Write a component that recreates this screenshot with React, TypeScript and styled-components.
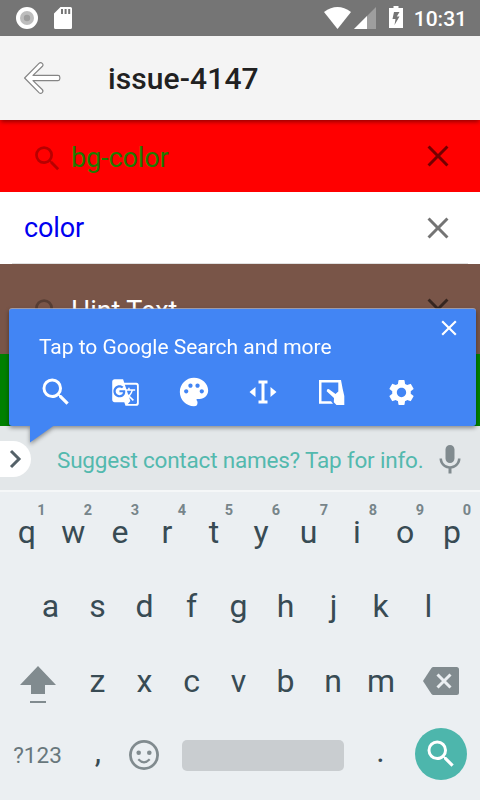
import React from 'react';
import styled, { createGlobalStyle } from 'styled-components';
import { MdGTranslate, MdPalette, MdSettings, MdMic, MdSearch, MdClose } from 'react-icons/md';

const GlobalStyle = createGlobalStyle`
  * { box-sizing: border-box; }
  body { margin: 0; overflow: hidden; font-family: Roboto, sans-serif; }
  svg { display: block; flex: none; }
`;

const Screen = styled.div`
  position: relative;
  width: 480px;
  height: 800px;
  display: flex;
  flex-direction: column;
  overflow: hidden;
  background: #fff;
`;

const StatusBar = styled.header`
  height: 36px;
  flex: none;
  display: flex;
  align-items: center;
  justify-content: space-between;
  padding: 0 13px 0 16px;
  background: #757575;
  color: #fff;
`;

const StatusGroup = styled.div<{ $gap: number }>`
  display: flex;
  align-items: center;
  gap: ${p => p.$gap}px;
`;

const Clock = styled.span`
  font-size: 21px;
  font-weight: 500;
  line-height: 36px;
  padding-top: 1px;
`;

const AppBar = styled.div`
  position: relative;
  height: 84px;
  flex: none;
  display: flex;
  align-items: center;
  padding-left: 22px;
  gap: 46px;
  background: #f4f4f4;
  box-shadow: 0 3px 4px -1px rgba(0, 0, 0, 0.4);
  z-index: 1;
`;

const Title = styled.h1`
  margin: 0;
  padding-top: 1px;
  font-size: 30px;
  font-weight: 500;
  line-height: 36px;
  letter-spacing: 0.1px;
  color: #212121;
`;

const SearchRow = styled.div<{ $bg: string; $height: number; $inset: number }>`
  height: ${p => p.$height}px;
  flex: none;
  display: flex;
  align-items: center;
  padding: 0 24px 0 ${p => p.$inset}px;
  background: ${p => p.$bg};
`;

const SearchGlyph = styled(MdSearch)`
  margin: 4px 7px 0 0;
  opacity: 0.28;
`;

const SearchText = styled.span<{ $color: string; $drop: number }>`
  flex: 1;
  font-size: 27px;
  line-height: 32px;
  letter-spacing: -0.1px;
  padding-top: ${p => p.$drop}px;
  color: ${p => p.$color};
`;

const ClearGlyph = styled(MdClose)`
  opacity: 0.54;
`;

const Divider = styled.div`
  height: 1px;
  flex: none;
  margin: -1px 12px 0;
  background: #e0e0e0;
`;

const Keyboard = styled.section`
  height: 374px;
  flex: none;
  display: flex;
  flex-direction: column;
  background: #ebeff2;
`;

const Suggestions = styled.div`
  height: 66px;
  flex: none;
  display: flex;
  align-items: center;
  background: #e3e7e9;
  border-bottom: 2px solid #f5f7f8;
`;

const Expander = styled.div`
  width: 31px;
  height: 36px;
  border-radius: 0 18px 18px 0;
  background: #fff;
  display: flex;
  align-items: center;
  padding-left: 9px;
  margin-top: 2px;
`;

const Suggestion = styled.span`
  flex: 1;
  padding: 4px 0 0 26px;
  font-size: 22.5px;
  line-height: 28px;
  letter-spacing: -0.2px;
  color: #53b9ae;
  white-space: nowrap;
`;

const MicGlyph = styled(MdMic)`
  margin: 3px 12px 0 0;
`;

const KeyRow = styled.div<{ $inset: number }>`
  height: 74.25px;
  flex: none;
  display: flex;
  align-items: center;
  padding-left: ${p => p.$inset}px;
`;

const Keys = styled.div`
  padding-top: 3px;
`;

const Key = styled.div<{ $lift?: number; $width?: number }>`
  position: relative;
  width: ${p => p.$width ?? 47}px;
  height: 74.25px;
  flex: none;
  text-align: center;
  font-size: 32px;
  line-height: ${p => 74.25 - 2 * (p.$lift ?? 0)}px;
  color: #384b54;
`;

const KeyHint = styled.span`
  position: absolute;
  top: 8px;
  right: 4.5px;
  font-size: 14.5px;
  line-height: 16px;
  font-weight: 700;
  color: #77858a;
`;

const ControlKey = styled.div<{ $width: number; $drop?: number }>`
  width: ${p => p.$width}px;
  height: 74.25px;
  flex: none;
  display: flex;
  align-items: center;
  justify-content: center;
  padding-top: ${p => p.$drop ?? 0}px;
  font-size: 22.5px;
  color: #68777c;
`;

const SpaceBar = styled.div`
  width: 162px;
  height: 31px;
  margin: 1px 13px 0 15px;
  border-radius: 5px;
  background: #c9cdd0;
`;

const SearchKey = styled.div`
  width: 52px;
  height: 52px;
  margin: -1px 0 0 10.5px;
  border-radius: 50%;
  background: #4db6ac;
  color: #fff;
  display: flex;
  align-items: center;
  justify-content: center;
`;

const Popup = styled.aside`
  position: absolute;
  left: 9px;
  top: 309px;
  width: 466.5px;
  height: 117px;
  z-index: 2;
  border-radius: 3px;
  background: #4285f4;
  color: #fff;
  filter: drop-shadow(0 2px 2px rgba(0, 0, 0, 0.4));
  box-shadow: 0 -1px 0 rgba(190, 205, 235, 0.6);
`;

const PopupTail = styled.svg`
  position: absolute;
  left: 21px;
  top: 116px;
`;

const PopupClose = styled(MdClose)`
  position: absolute;
  right: 14px;
  top: 5.5px;
`;

const PopupText = styled.p`
  margin: 0;
  padding: 24px 0 0 30px;
  font-size: 21px;
  line-height: 28px;
  letter-spacing: -0.03px;
  white-space: nowrap;
`;

const PopupTools = styled.div`
  display: flex;
  padding: 13px 0 0 12.5px;
`;

const Tool = styled.div`
  width: 69px;
  height: 36px;
  display: flex;
  align-items: center;
  justify-content: center;
`;

const BackArrow = () => (
  <svg width="40" height="40" viewBox="0 0 40 40">
    <path
      d="M2.6 20 17 5.4q1.6-1.5 3.2 0t0 3.1L11 17.4H36q1.8 0 1.8 1.8v1.6q0 1.8-1.8 1.8H11l9.2 8.9q1.5 1.6 0 3.1t-3.2 0z"
      fill="#fff"
      stroke="#858585"
      strokeWidth="1.2"
      strokeLinejoin="round"
    />
  </svg>
);

const RecordIcon = () => (
  <svg width="22" height="22" viewBox="0 0 22 22">
    <circle cx="11" cy="11" r="11" fill="#fff" />
    <circle cx="11" cy="11" r="7" fill="#bdbdbd" />
    <circle cx="11" cy="11" r="3.2" fill="#9e9e9e" />
  </svg>
);

const SdCardIcon = () => (
  <svg width="18" height="22" viewBox="0 0 18 22">
    <path
      fill="#fff"
      fillRule="evenodd"
      d="M6.5 0H16.5q1.5 0 1.5 1.5v19q0 1.5-1.5 1.5h-15Q0 22 0 20.5V6.5zM7 2v5h2V2zm3.6 0v5h2V2zm3.6 0v5h2V2z"
    />
  </svg>
);

const WifiIcon = () => (
  <svg width="27" height="22" viewBox="0 0 27 22">
    <path fill="#fff" d="M0 5Q13.5-5 27 5L13.5 22z" />
  </svg>
);

const SignalIcon = () => (
  <svg width="22" height="22" viewBox="0 0 22 22">
    <path fill="#9e9e9e" d="M22 0v22H0z" />
    <path fill="#fff" d="M13 9v13H0z" />
  </svg>
);

const BatteryIcon = () => (
  <svg width="14" height="24" viewBox="0 0 14 24">
    <path
      fill="#fff"
      fillRule="evenodd"
      d="M4.5 0h5v2H14v20H0V2h4.5zM5 6 3.5 13h3L5.5 19l5-8.500H7.800L10.500 6z"
    />
  </svg>
);

const SelectTextIcon = () => (
  <svg width="28" height="24" viewBox="0 0 28 24" fill="currentColor">
    <path d="M9.5.5h9v3h-3v17h3v3h-9v-3h3v-17h-3zM6.5 7v10L.5 12zM21.5 7v10l6-5z" />
  </svg>
);

const TouchPageIcon = () => (
  <svg width="26" height="25" viewBox="0 0 26 25" fill="currentColor">
    <path d="M0 0H22L23.7 9 25.3 16V25H17.5L14.8 22.2 15 18 7.7 11.3Q7.7 8.5 10 9.2L16.5 14 19.3 11.5V2.5H2.5V21.3H12L14 23.8H0z" />
  </svg>
);

const ShiftIcon = () => (
  <svg width="36" height="38" viewBox="0 0 36 38" fill="#818b8f">
    <path d="M18 0 36 19H25v9H11v-9H0zM10 35h16v2H10z" />
  </svg>
);

const BackspaceIcon = () => (
  <svg width="36" height="28" viewBox="0 0 36 28">
    <path fill="#818b8f" d="M10.5 0H33.5Q36 0 36 2.5v23q0 2.5-2.5 2.5h-23q-1.3 0-2.2-1.3L0 14 8.3 1.3Q9.2 0 10.5 0z" />
    <path stroke="#ebeff2" strokeWidth="3" d="m14.5 7.5 13 13m0-13-13 13" />
  </svg>
);

const SmileIcon = () => (
  <svg width="30" height="30" viewBox="0 0 30 30" fill="none" stroke="#818b8f">
    <circle cx="15" cy="15" r="13.6" strokeWidth="2.8" />
    <circle cx="9.7" cy="12.7" r="2.3" fill="#818b8f" stroke="none" />
    <circle cx="20.3" cy="12.7" r="2.3" fill="#818b8f" stroke="none" />
    <path d="M9.3 19.3q5.7 6 11.4 0" strokeWidth="2.2" />
  </svg>
);

const ChevronIcon = () => (
  <svg width="14" height="20" viewBox="0 0 14 20" fill="none" stroke="#546168" strokeWidth="3">
    <path d="m2 2 8 8-8 8" />
  </svg>
);

type KeySpec = [letter: string, width: number];

const topRow: KeySpec[] = [
  ['q', 46.5], ['w', 46.5], ['e', 47], ['r', 47], ['t', 47],
  ['y', 47], ['u', 48], ['i', 49], ['o', 47], ['p', 47],
];
const homeRow: KeySpec[] = [
  ['a', 47], ['s', 47], ['d', 47], ['f', 47], ['g', 47],
  ['h', 47], ['j', 49], ['k', 45], ['l', 51],
];
const bottomRow: KeySpec[] = [
  ['z', 47], ['x', 47], ['c', 47], ['v', 47], ['b', 47], ['n', 48], ['m', 48],
];

export default function App() {
  return (
    <>
      <GlobalStyle />
      <Screen>
        <StatusBar>
          <StatusGroup $gap={16}>
            <RecordIcon />
            <SdCardIcon />
          </StatusGroup>
          <StatusGroup $gap={13}>
            <StatusGroup $gap={3}>
              <WifiIcon />
              <SignalIcon />
            </StatusGroup>
            <StatusGroup $gap={11}>
              <BatteryIcon />
              <Clock>10:31</Clock>
            </StatusGroup>
          </StatusGroup>
        </StatusBar>
        <AppBar>
          <BackArrow />
          <Title>issue-4147</Title>
        </AppBar>
        <SearchRow $bg="#ff0000" $height={72} $inset={31}>
          <SearchGlyph size={33} />
          <SearchText $color="#1f7a00" $drop={4}>bg-color</SearchText>
          <ClearGlyph size={36} />
        </SearchRow>
        <SearchRow $bg="#ffffff" $height={72} $inset={24}>
          <SearchText $color="#0000f0" $drop={0}>color</SearchText>
          <ClearGlyph size={36} />
        </SearchRow>
        <Divider />
        <SearchRow $bg="#795548" $height={90} $inset={31}>
          <SearchGlyph size={33} />
          <SearchText $color="#ffffff" $drop={4}>Hint Text</SearchText>
          <ClearGlyph size={36} />
        </SearchRow>
        <SearchRow $bg="#008000" $height={72} $inset={24} />
        <Keyboard>
          <Suggestions>
            <Expander><ChevronIcon /></Expander>
            <Suggestion>Suggest contact names? Tap for info.</Suggestion>
            <MicGlyph size={36} color="#818b8f" />
          </Suggestions>
          <Keys>
            <KeyRow $inset={3.5}>
              {topRow.map(([letter, width], i) => (
                <Key key={letter} $width={width}>
                  {letter}
                  <KeyHint>{(i + 1) % 10}</KeyHint>
                </Key>
              ))}
            </KeyRow>
            <KeyRow $inset={27}>
              {homeRow.map(([letter, width]) => <Key key={letter} $width={width}>{letter}</Key>)}
            </KeyRow>
            <KeyRow $inset={2}>
              <ControlKey $width={72} $drop={8}><ShiftIcon /></ControlKey>
              {bottomRow.map(([letter, width]) => <Key key={letter} $width={width}>{letter}</Key>)}
              <ControlKey $width={72}><BackspaceIcon /></ControlKey>
            </KeyRow>
            <KeyRow $inset={0}>
              <ControlKey $width={75}>?123</ControlKey>
              <Key $lift={4} $width={46}>,</Key>
              <ControlKey $width={46}><SmileIcon /></ControlKey>
              <SpaceBar />
              <Key $lift={4}>.</Key>
              <SearchKey><MdSearch size={36} /></SearchKey>
            </KeyRow>
          </Keys>
        </Keyboard>
        <Popup>
          <PopupTail width="24" height="18" viewBox="0 0 24 18">
            <path fill="#4285f4" d="M0 0h24v.5L0 17.500z" />
          </PopupTail>
          <PopupClose size={26} />
          <PopupText>Tap to Google Search and more</PopupText>
          <PopupTools>
            <Tool><MdSearch size={36} /></Tool>
            <Tool><MdGTranslate size={29} /></Tool>
            <Tool><MdPalette size={34} /></Tool>
            <Tool><SelectTextIcon /></Tool>
            <Tool><TouchPageIcon /></Tool>
            <Tool><MdSettings size={31} /></Tool>
          </PopupTools>
        </Popup>
      </Screen>
    </>
  );
}
